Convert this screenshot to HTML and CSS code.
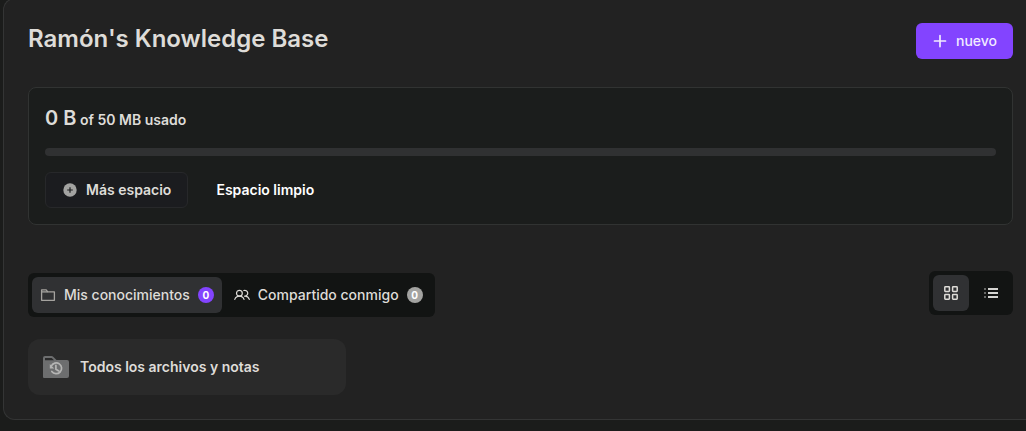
FILE: index.html
```
<!DOCTYPE html>
<html lang="es">
<head>
<meta charset="utf-8">
<meta name="viewport" content="width=device-width, initial-scale=1">
<title>Ramón's Knowledge Base</title>
<link rel="stylesheet" href="styles.css">
</head>
<body>
<main class="panel">
  <header class="header">
    <h1 class="title">Ramón's Knowledge Base</h1>
    <button class="btn btn-primary" type="button">
      <svg class="icon" viewBox="0 0 16 16" fill="none" stroke="currentColor" stroke-width="1.7" stroke-linecap="round" aria-hidden="true"><path d="M8 2.6v11M2.5 8h11"/></svg>
      nuevo
    </button>
  </header>

  <section class="storage">
    <p class="usage"><span class="usage-value">0 B</span> of 50 MB usado</p>
    <div class="bar" role="progressbar" aria-label="Espacio usado" aria-valuemin="0" aria-valuemax="50" aria-valuenow="0"></div>
    <div class="actions">
      <button class="btn btn-outline" type="button">
        <svg class="icon" viewBox="0 0 16 16" aria-hidden="true"><circle cx="8" cy="8" r="6.7" fill="#a3a3a1"/><path d="M8 5.2v5.6M5.2 8h5.6" fill="none" stroke="#1c1d1f" stroke-width="1.2"/></svg>
        Más espacio
      </button>
      <button class="btn btn-ghost" type="button">Espacio limpio</button>
    </div>
  </section>

  <div class="toolbar">
    <div class="segment tabs" role="tablist">
      <button class="tab active" type="button" role="tab" aria-selected="true">
        <svg class="icon" viewBox="0 0 16 16" fill="none" stroke="#a5a39f" stroke-width="1.3" stroke-linejoin="round" aria-hidden="true"><path d="M1.6 13.3V2.8h4.6l1.5 2.1h6.7v8.4z"/><path d="M1.6 4.9h6"/></svg>
        Mis conocimientos
        <span class="badge badge-accent">0</span>
      </button>
      <button class="tab" type="button" role="tab" aria-selected="false">
        <svg class="icon" viewBox="0 0 16 16" fill="none" stroke="currentColor" stroke-width="1.2" stroke-linecap="round" stroke-linejoin="round" aria-hidden="true"><circle cx="5.4" cy="6.2" r="2.9"/><path d="M.8 12.4c.7-2 2.3-3.2 4.6-3.2s3.9 1.2 4.6 3.2M9.8 3.5a2.9 2.9 0 1 1 .8 5.6M11.2 9.2c2 .2 3.4 1.3 4.1 3.2"/></svg>
        Compartido conmigo
        <span class="badge">0</span>
      </button>
    </div>
    <div class="segment">
      <button class="view active" type="button" aria-label="Cuadrícula" aria-pressed="true">
        <svg class="icon" viewBox="0 0 16 16" fill="none" stroke="currentColor" stroke-width="1.5" aria-hidden="true"><rect x="1.8" y="1.8" width="4.6" height="4.6" rx=".6"/><rect x="9.6" y="1.8" width="4.6" height="4.6" rx=".6"/><rect x="1.8" y="9.6" width="4.6" height="4.6" rx=".6"/><rect x="9.6" y="9.6" width="4.6" height="4.6" rx=".6"/></svg>
      </button>
      <button class="view" type="button" aria-label="Lista" aria-pressed="false">
        <svg class="icon" viewBox="0 0 16 16" aria-hidden="true"><path d="M5 3h10v2H5zM5 7h10v2H5zM5 11h10v2H5z" fill="#d4d4d1"/><path d="M1 3h2v2H1zM1 7h2v2H1zM1 11h2v2H1z" fill="#676866"/></svg>
      </button>
    </div>
  </div>

  <a class="folder" href="#archivos">
    <svg class="folder-icon" viewBox="0 0 28 28" aria-hidden="true">
      <path d="M1 24V5q0-2 2-2h6.5q1 0 1.7.8L14.5 7H25q2 0 2 2v14q0 2-2 2H2q-1 0-1-1z" fill="#6d6e6f"/>
      <path d="M3 4.9h6.7L12 7.2H3z" fill="#2a2a2a"/>
      <path d="M9.3 13a5.4 5.4 0 1 1 .5 5.4M13.9 12.3v3.9l2.9 1.7" fill="none" stroke="#b5b5b4" stroke-width="1.7" stroke-linecap="round" stroke-linejoin="round"/>
      <path d="M7.8 11v4.6h4.4z" fill="#b5b5b4"/>
    </svg>
    Todos los archivos y notas
  </a>
</main>
</body>
</html>
```
FILE: styles.css
```
* {
  box-sizing: border-box;
}

body {
  margin: 0;
  overflow: hidden;
  background: #1b1c1b;
  color: #dedcd8;
  font: 500 14px/20px Inter, "Liberation Sans", sans-serif;
}

.panel {
  display: flex;
  flex-direction: column;
  margin: -2px 0 0 3px;
  padding: 24px 13px 24px 24px;
  background: #222222;
  border: 1px solid #343535;
  border-right: 0;
  border-radius: 12px 0 0 12px;
}

.header,
.toolbar {
  display: flex;
  align-items: flex-start;
  justify-content: space-between;
}

.title {
  margin: 0;
  font-size: 24px;
  font-weight: 600;
  line-height: 32px;
}

.icon {
  width: 16px;
  height: 16px;
  flex: none;
}

button {
  border: 0;
  background: none;
  color: inherit;
  font: inherit;
  cursor: pointer;
}

.btn {
  display: inline-flex;
  align-items: center;
  gap: 8px;
  height: 36px;
  padding: 0 16px;
  border-radius: 6px;
}

.btn-primary {
  background: #8344ff;
  color: #f1eaff;
}

.btn-outline {
  background: #1b1c1f;
  border: 1px solid #27282a;
  font-weight: 600;
}

.btn-ghost {
  color: #ffffff;
  font-weight: 600;
}

.storage {
  display: flex;
  flex-direction: column;
  gap: 16px;
  margin-top: 28px;
  padding: 16px;
  background: #1b1d1c;
  border: 1px solid #313332;
  border-radius: 8px;
}

.usage {
  margin: 0;
  font-weight: 600;
  line-height: 20px;
}

.usage-value {
  font-size: 20px;
  line-height: 28px;
}

.bar {
  height: 8px;
  border-radius: 4px;
  background: #303132;
}

.actions {
  display: flex;
  gap: 12px;
}

.toolbar {
  margin-top: 46px;
}

.segment {
  display: flex;
  gap: 4px;
  padding: 4px;
  background: #121413;
  border-radius: 6px;
}

.tabs {
  margin-top: 2px;
}

.tab {
  display: flex;
  align-items: center;
  gap: 8px;
  height: 36px;
  padding: 0 8px;
  border-radius: 6px;
}

.view {
  display: grid;
  place-items: center;
  width: 36px;
  height: 36px;
  padding: 0;
  border-radius: 6px;
}

.active {
  background: #303133;
}

.badge {
  width: 16px;
  height: 16px;
  border-radius: 50%;
  background: #a3a3a1;
  color: #ffffff;
  font-size: 10px;
  font-weight: 700;
  line-height: 16px;
  text-align: center;
}

.badge-accent {
  background: #8344ff;
}

.folder {
  display: flex;
  align-items: center;
  gap: 10px;
  width: 318px;
  max-width: 100%;
  height: 56px;
  margin-top: 22px;
  padding: 0 14px;
  border-radius: 12px;
  background: #2a2a2a;
  color: inherit;
  font-weight: 600;
  text-decoration: none;
}

.folder-icon {
  width: 28px;
  height: 28px;
  flex: none;
}
```
